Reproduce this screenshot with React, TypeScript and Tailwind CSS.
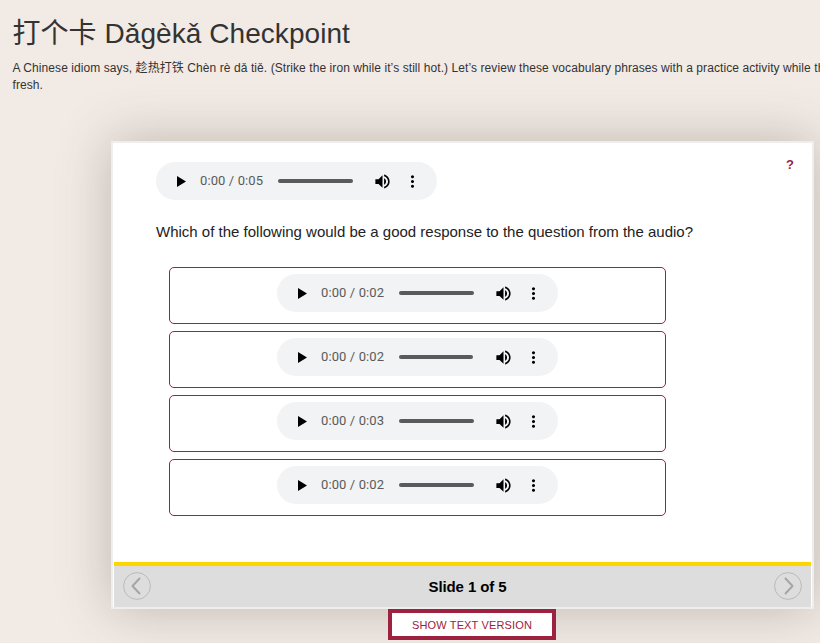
import React from "react";

function AudioPlayer({ duration, barWidth = "w-[75px]" }: { duration: string; barWidth?: string }) {
  return (
    <div className="flex h-[38px] w-[281px] shrink-0 items-center rounded-full bg-[#f1f3f4] pl-[21px]">
      <svg className="mt-px h-[11px] w-[9px] shrink-0" viewBox="0 0 9 11">
        <path d="M0 0v11l9-5.5z" fill="#000" />
      </svg>
      <span className="ml-[14px] w-[78px] shrink-0 whitespace-pre font-[Roboto,sans-serif] text-[13px] leading-[16px] tracking-[0.11px] text-[#5a5a5a]">
        {"0:00 / " + duration}
      </span>
      <div className="w-[75px] shrink-0">
        <div className={"h-1 rounded-full bg-[#5a5a5a] " + barWidth} />
      </div>
      <svg className="ml-[20px] h-[19px] w-[19px] shrink-0" viewBox="0 0 24 24" fill="#000">
        <path d="M3 9v6h4l5 5V4L7 9H3zm13.5 3c0-1.77-1.02-3.29-2.5-4.03v8.05c1.48-.73 2.5-2.25 2.5-4.02zM14 3.23v2.06c2.89.86 5 3.54 5 6.71s-2.11 5.85-5 6.71v2.06c4.01-.91 7-4.49 7-8.77s-2.99-7.86-7-8.77z" />
      </svg>
      <svg className="ml-[11px] h-[19px] w-[19px] shrink-0" viewBox="0 0 24 24" fill="#000">
        <path d="M12 8c1.1 0 2-.9 2-2s-.9-2-2-2-2 .9-2 2 .9 2 2 2zm0 2c-1.1 0-2 .9-2 2s.9 2 2 2 2-.9 2-2-.9-2-2-2zm0 6c-1.1 0-2 .9-2 2s.9 2 2 2 2-.9 2-2-.9-2-2-2z" />
      </svg>
    </div>
  );
}

function SlideArrow({ d, label }: { d: string; label: string }) {
  return (
    <button aria-label={label} className="h-[28px] w-[28px]">
      <svg viewBox="0 0 28 28" className="h-[28px] w-[28px]" fill="none">
        <circle cx="14" cy="14" r="13.4" stroke="#bababa" strokeWidth="1" />
        <path d={d} stroke="#a6a6a6" strokeWidth="2" strokeLinecap="round" strokeLinejoin="round" />
      </svg>
    </button>
  );
}

const options = [
  { duration: "0:02", bar: "w-[75px]" },
  { duration: "0:02", bar: "w-[74px]" },
  { duration: "0:03", bar: "w-[75px]" },
  { duration: "0:02", bar: "w-[75px]" },
];

export default function App() {
  return (
    <main className="h-[643px] w-[820px] overflow-hidden bg-[#f2eae4] font-['Liberation_Sans','Noto_Sans_CJK_SC',sans-serif] text-[#333]">
      <header className="h-[141px] pl-[12.5px] pt-[15px]">
        <h1 className="h-[38px] whitespace-nowrap text-[28px] leading-[38px] tracking-[0.06px]">打个卡 Dǎgèkǎ Checkpoint</h1>
        <p className="mt-[7px] whitespace-nowrap text-[12px] leading-[17px] tracking-[0.078px]">
          A Chinese idiom says, 趁热打铁 Chèn rè dǎ tiě. (Strike the iron while it’s still hot.) Let’s review these vocabulary phrases with a practice activity while th
          <br />
          fresh.
        </p>
      </header>

      <section className="ml-[111px] flex h-[468px] w-[703px] flex-col border-2 border-[#eee] bg-white shadow-[0_0_50px_rgba(68,68,58,0.3)]">
        <div className="flex h-[419px] flex-col pl-[43px] pt-[19px]">
          <div className="flex justify-between pr-[18px]">
            <AudioPlayer duration="0:05" />
            <span className="-mt-[5px] text-[13px] font-bold leading-[16px] text-[#9d2240]">?</span>
          </div>
          <p className="mt-[22px] h-5 whitespace-nowrap text-[15px] leading-5 text-[#222]">
            Which of the following would be a good response to the question from the audio?
          </p>
          <div className="ml-[13px] mt-[25px] flex flex-col gap-[7px]">
            {options.map((option, i) => (
              <div key={i} className="flex h-[57px] w-[497px] justify-center rounded-[5px] border border-[#9d2240] pt-[6px]">
                <AudioPlayer duration={option.duration} barWidth={option.bar} />
              </div>
            ))}
          </div>
        </div>
        <footer className="mx-px flex h-[45px] items-start justify-between border-t-4 border-[#fdd600] bg-[#ddd] px-[9px] pt-[6px]">
          <SlideArrow label="Previous" d="M16.5 6.5L9.5 14L16.5 21.5" />
          <span className="ml-[10px] pt-[3px] text-[15px] font-bold leading-6 tracking-[-0.1px] text-black">Slide 1 of 5</span>
          <SlideArrow label="Next" d="M11.5 6.5L18.5 14L11.5 21.5" />
        </footer>
      </section>

      <div className="relative ml-[388px] flex h-[31px] w-[168px] items-center justify-center border-4 border-[#9d2240] bg-white pt-px text-[11px] tracking-[0.15px] text-[#9d2240]">
        SHOW TEXT VERSION
      </div>
    </main>
  );
}
